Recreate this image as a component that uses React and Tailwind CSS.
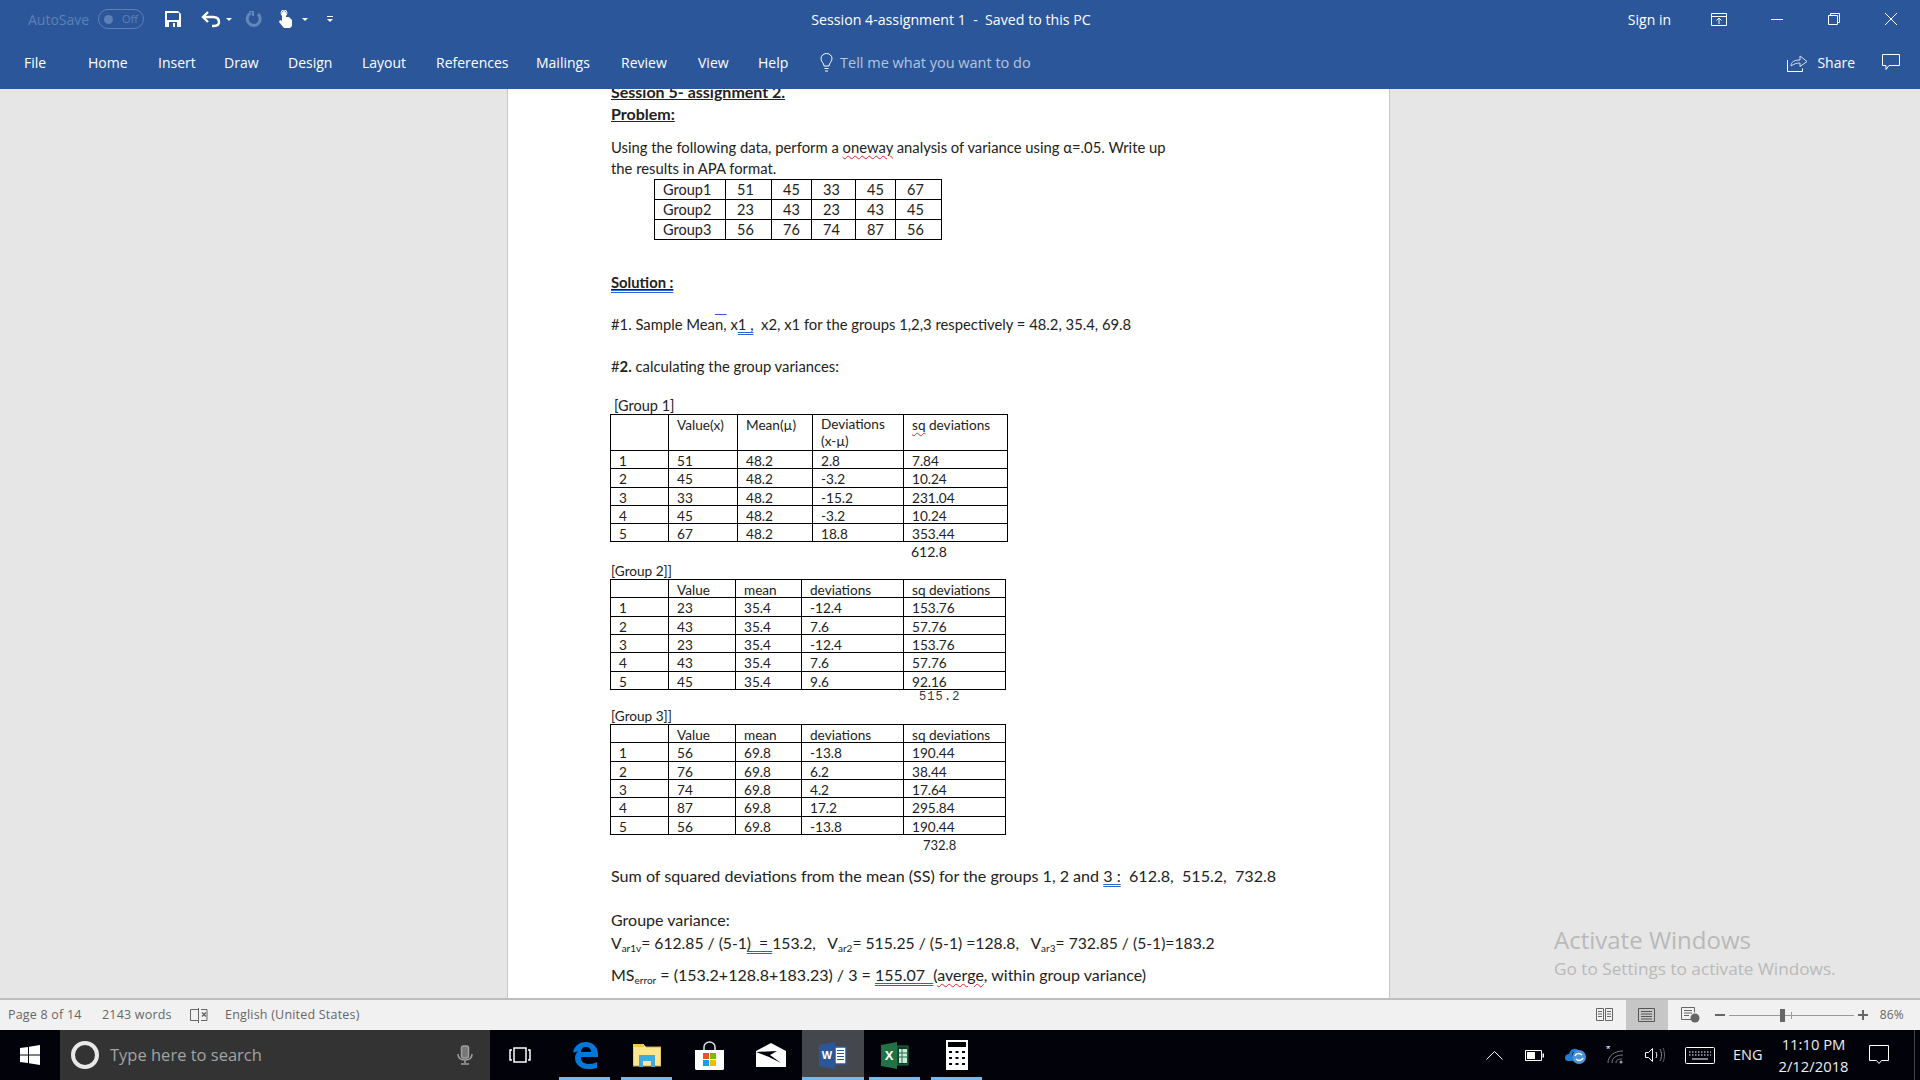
const groupOne = {
	cols: [58, 69, 75, 91, 104],
	heights: [36, 18, 19, 18, 18, 18],
	rows: [
		["", "Value(x)", "Mean(µ)", "Deviations\n(x-µ)", "sq deviations"],
		["1", "51", "48.2", "2.8", "7.84"],
		["2", "45", "48.2", "-3.2", "10.24"],
		["3", "33", "48.2", "-15.2", "231.04"],
		["4", "45", "48.2", "-3.2", "10.24"],
		["5", "67", "48.2", "18.8", "353.44"],
	],
};

const groupTwo = {
	cols: [58, 67, 66, 102, 102],
	heights: [18, 19, 18, 18, 19, 18],
	rows: [
		["", "Value", "mean", "deviations", "sq deviations"],
		["1", "23", "35.4", "-12.4", "153.76"],
		["2", "43", "35.4", "7.6", "57.76"],
		["3", "23", "35.4", "-12.4", "153.76"],
		["4", "43", "35.4", "7.6", "57.76"],
		["5", "45", "35.4", "9.6", "92.16"],
	],
};

const groupThree = {
	cols: [58, 67, 66, 102, 102],
	heights: [18, 19, 18, 18, 19, 18],
	rows: [
		["", "Value", "mean", "deviations", "sq deviations"],
		["1", "56", "69.8", "-13.8", "190.44"],
		["2", "76", "69.8", "6.2", "38.44"],
		["3", "74", "69.8", "4.2", "17.64"],
		["4", "87", "69.8", "17.2", "295.84"],
		["5", "56", "69.8", "-13.8", "190.44"],
	],
};

const smallRows = [
	["Group1", "51", "45", "33", "45", "67"],
	["Group2", "23", "43", "23", "43", "45"],
	["Group3", "56", "76", "74", "87", "56"],
];
const smallCols = [71, 46, 40, 44, 40, 46];

const tabs = [
	["File", "ml-[24px] w-[64px]"],
	["Home", "w-[70px]"],
	["Insert", "w-[66px]"],
	["Draw", "w-[64px]"],
	["Design", "w-[74px]"],
	["Layout", "w-[74px]"],
	["References", "w-[100px]"],
	["Mailings", "w-[85px]"],
	["Review", "w-[77px]"],
	["View", "w-[60px]"],
	["Help", "w-[62px]"],
];

const Wavy = ({ children }) => (
	<span className="underline decoration-wavy decoration-[#d8262c] decoration-1 underline-offset-2">{children}</span>
);

const Blue = ({ children }) => (
	<span className="underline decoration-double decoration-[#2b62d6] decoration-1 underline-offset-2">{children}</span>
);

const DataTable = ({ data }) => (
	<table className="table-fixed border-collapse border border-black -ml-px text-[13.6px] text-[#222]">
		<colgroup>
			{data.cols.map((w, i) => (
				<col key={i} style={{ width: w }} />
			))}
		</colgroup>
		<tbody>
			{data.rows.map((row, r) => (
				<tr key={r} style={{ height: data.heights[r] }}>
					{row.map((cell, c) => (
						<td
							key={c}
							className={`border border-black pl-[8px] pr-0 pb-0 align-top overflow-hidden whitespace-pre-line ${cell.includes("\n") ? "pt-px leading-[17px]" : "pt-[3px] leading-[14px]"}`}
						>
							{cell === "sq deviations" ? (
								<>
									<Wavy>sq</Wavy> deviations
								</>
							) : (
								cell
							)}
						</td>
					))}
				</tr>
			))}
		</tbody>
	</table>
);

const Line = ({ className = "", children }) => (
	<div className={`h-5 leading-5 whitespace-pre text-[#222] ${className}`}>{children}</div>
);

const Sub = ({ children }) => <sub className="text-[10px] leading-none">{children}</sub>;

const TitleBar = () => (
	<div className="h-[38px] flex items-center text-white relative">
		<span className="ml-[28px] w-[70px] text-[14px] text-[#5d80b5]">AutoSave</span>
		<div className="w-[46px] h-[20px] rounded-full border border-[#5d80b5] flex items-center justify-between px-[5px] text-[11px] text-[#5d80b5]">
			<span className="w-[9px] h-[9px] rounded-full bg-[#5d80b5]" />
			Off
		</div>
		<svg className="ml-[21px]" width="16" height="16" viewBox="0 0 16 16">
			<path d="M0 0h13l3 3v13H0z" fill="#fff" />
			<path d="M2 2h12v7H2z" fill="#2b579a" />
			<path d="M4 11h8v5H4z" fill="#2b579a" />
			<path d="M8 12h2v4H8z" fill="#fff" />
		</svg>
		<svg className="ml-[20px]" width="20" height="18" viewBox="0 0 20 18" fill="none" stroke="#fff" strokeWidth="2.4">
			<path d="M7 2 2 7l5 5" />
			<path d="M3 7h9c4 0 6 2 6 5s-2 4-5 4h-2" />
		</svg>
		<span className="ml-[5px] border-x-[3px] border-x-transparent border-t-[3px] border-t-white" />
		<svg className="ml-[13px]" width="17" height="17" viewBox="0 0 17 17" fill="none" stroke="#6486ba" strokeWidth="3">
			<path d="M13 3a6.5 6.5 0 1 1-7-1" />
			<path d="M4 0h4v5" strokeWidth="2" />
		</svg>
		<svg className="ml-[16px]" width="14" height="18" viewBox="0 0 14 18">
			<path d="M4 9V3a2 2 0 0 1 4 0v4h3l3 3v6l-2 2H6L1 12l1-2 2 1z" fill="#fff" />
			<circle cx="6" cy="3" r="3" fill="none" stroke="#fff" />
		</svg>
		<span className="ml-[10px] border-x-[3px] border-x-transparent border-t-[3px] border-t-white" />
		<div className="ml-[19px] flex flex-col items-center gap-[2px]">
			<span className="w-[6px] h-px bg-white" />
			<span className="border-x-[3px] border-x-transparent border-t-[3px] border-t-white" />
		</div>
		<div className="absolute left-0 right-0 top-0 h-[40px] flex items-center justify-center pr-[18px] text-[14.2px] whitespace-pre">
			Session 4-assignment 1  -  Saved to this PC
		</div>
		<span className="ml-auto text-[14px]">Sign in</span>
		<svg className="ml-[40px]" width="16" height="13" viewBox="0 0 16 13" fill="none" stroke="#fff">
			<path d="M.5.5h15v12H.5zM.5 3.500h15M8 11V5M5.500 7.500 8 5l2.500 2.500" />
		</svg>
		<span className="ml-[44px] w-[12px] h-px bg-white" />
		<svg className="ml-[45px]" width="12" height="12" viewBox="0 0 12 12" fill="none" stroke="#fff">
			<path d="M.5 2.500h9v9h-9zM2.500 2.500v-2h9v9h-2" />
		</svg>
		<svg className="ml-[45px] mr-[23px]" width="12" height="12" viewBox="0 0 12 12" stroke="#fff">
			<path d="M0 0l12 12M12 0 0 12" />
		</svg>
	</div>
);

const RibbonTabs = () => (
	<div className="h-[51px] pb-[2px] flex items-center text-white text-[14px]">
		{tabs.map(([label, size]) => (
			<span key={label} className={`shrink-0 ${size}`}>
				{label}
			</span>
		))}
		<svg width="13" height="19" viewBox="0 0 13 19" fill="none" stroke="#fff">
			<path d="M4 13c0-3-3-4-3-7.500a5.500 5 0 0 1 11 0C12 9 9 10 9 13zM4.500 15.500h4M5 18h3" />
		</svg>
		<span className="ml-[7px] text-[14.5px] text-[#b4c5de]">Tell me what you want to do</span>
		<svg className="ml-auto" width="21" height="18" viewBox="0 0 21 18" fill="none" stroke="#fff">
			<path d="M.5 6v11.500h15v-3" />
			<path d="M4 12c0-4 3-6 9-6V2l7 5.500-7 5V9c-4 0-6 1-9 3z" stroke="#d5deec" />
		</svg>
		<span className="ml-[9px] text-[14px]">Share</span>
		<svg className="ml-[27px] mr-[20px]" width="18" height="17" viewBox="0 0 18 17" fill="none" stroke="#fff">
			<path d="M.5.500h17v11H7l-3 4v-4H.5z" />
		</svg>
	</div>
);

const Document = () => (
	<div className="w-[883px] h-full bg-white border-x border-[#c8c8c8] pl-[103px] overflow-hidden text-[14.8px] font-['Lato',sans-serif]">
		<Line className="-mt-[7px] text-[16px] font-bold underline">Session 5- assignment 2.</Line>
		<Line className="mt-[2px] text-[16px] font-bold underline">Problem:</Line>
		<Line className="mt-[13px]">
			Using the following data, perform a <Wavy>oneway</Wavy> analysis of variance using α=.05. Write up
		</Line>
		<Line className="mt-px">the results in APA format.</Line>
		<table className="mt-px ml-[43px] table-fixed border-collapse border border-black text-[14.5px] leading-[19px] text-[#222]">
			<colgroup>
				{smallCols.map((w, i) => (
					<col key={i} style={{ width: w }} />
				))}
			</colgroup>
			<tbody>
				{smallRows.map((row) => (
					<tr key={row[0]} className="h-5">
						{row.map((cell, c) => (
							<td key={c} className={`border border-black py-0 ${c === 0 ? "pl-[8px]" : "pl-[11px]"}`}>
								{cell}
							</td>
						))}
					</tr>
				))}
			</tbody>
		</table>
		<Line className="mt-[32px] font-bold underline">
			<Blue>Solution :</Blue>
		</Line>
		<Line className="mt-[22px]">
			#1. Sample Mea<span className="overline decoration-[#2b62d6]">n,</span> x<Blue>1 ,</Blue>  x2, x1 for the groups 1,2,3 respectively = 48.2, 35.4, 69.8
		</Line>
		<Line className="mt-[22px]">
			#<b>2.</b> calculating the group variances:
		</Line>
		<div className="mt-[22px] h-4 pl-[3px] text-[14.5px] leading-4 text-[#222]">[Group 1]</div>
		<DataTable data={groupOne} />
		<div className="mt-[2px] h-4 pl-[300px] text-[14px] leading-4 text-[#222]">612.8</div>
		<div className="mt-[3px] h-4 text-[13.6px] leading-4 text-[#222]">[Group 2]]</div>
		<DataTable data={groupTwo} />
		<div className="h-[14px] pl-[308px] font-['Liberation_Mono',monospace] text-[12px] tracking-[1.1px] leading-[14px] text-[#333]">515.2</div>
		<div className="mt-1 h-4 text-[13.6px] leading-4 text-[#222]">[Group 3]]</div>
		<DataTable data={groupThree} />
		<div className="mt-[2px] h-4 pl-[312px] text-[13px] leading-4 text-[#222]">732.8</div>
		<Line className="mt-[13px] text-[16.1px]">
			Sum of squared deviations from the mean (SS) for the groups 1, 2 and <Blue>3 :</Blue>  612.8,  515.2,  732.8
		</Line>
		<Line className="mt-[24px] text-[16px]">Groupe variance:</Line>
		<Line className="mt-[3px] text-[15.7px]">
			V<Sub>ar1v</Sub>= 612.85 / (5-1<Blue>)  = </Blue>153.2,   V<Sub>ar2</Sub>= 515.25 / (5-1) =128.8,   V<Sub>ar3</Sub>= 732.85 / (5-1)=183.2
		</Line>
		<Line className="mt-[12px] text-[16px]">
			MS<Sub>error</Sub> = (153.2+128.8+183.23) / 3 = <Blue>155.07  </Blue>(<Wavy>averge</Wavy>, within group variance)
		</Line>
	</div>
);

const StatusBar = () => (
	<div className="h-[30px] bg-[#f1f1f1] flex items-center text-[12.5px] tracking-[0.2px] text-[#666]">
		<span className="ml-[8px] w-[94px]">Page 8 of 14</span>
		<span className="w-[88px]">2143 words</span>
		<svg width="18" height="15" viewBox="0 0 18 15" fill="none" stroke="#666">
			<path d="M8.500 1.500H.5v11h8zM8.500 0v15M11 1.500h6v11h-6" />
			<path d="M12 4.500l4 4M16 4.500l-4 4" strokeWidth="1.500" />
		</svg>
		<span className="ml-[17px]">English (United States)</span>
		<svg className="ml-auto" width="17" height="14" viewBox="0 0 17 14" fill="none" stroke="#666">
			<path d="M.5.500h7v12h-7zM9.500.500h7v12h-7zM2 3.500h4M2 6h4M2 8.500h4M11 3.500h4M11 6h4M11 8.500h4" />
		</svg>
		<div className="ml-[13px] w-[42px] h-[30px] bg-[#c6c6c6] flex items-center justify-center">
			<svg width="17" height="14" viewBox="0 0 17 14" fill="none" stroke="#555">
				<path d="M.5.500h16v13H.5zM3 3.500h11M3 6h11M3 8.500h11M3 11h11" />
			</svg>
		</div>
		<svg className="ml-[13px]" width="19" height="16" viewBox="0 0 19 16" fill="none" stroke="#666">
			<path d="M10 12.500H.5v-12h13v5M3 3.500h8M3 6h8M3 8.500h5" />
			<circle cx="14" cy="11" r="4.500" fill="#666" stroke="none" />
		</svg>
		<span className="ml-[15px] w-[10px] h-[2px] bg-[#666]" />
		<div className="ml-[4px] w-[125px] h-px bg-[#999] relative">
			<span className="absolute left-[51px] -top-[6px] w-[5px] h-[13px] bg-[#666]" />
			<span className="absolute left-[62px] -top-[3px] w-px h-[7px] bg-[#999]" />
		</div>
		<span className="ml-[4px] w-[10px] h-[10px] relative">
			<span className="absolute left-0 top-[4px] w-[10px] h-[2px] bg-[#666]" />
			<span className="absolute left-[4px] top-0 w-[2px] h-[10px] bg-[#666]" />
		</span>
		<span className="ml-[12px] mr-[16px] text-[12px] text-[#666]">86%</span>
	</div>
);

const TaskSlot = ({ active, running, children }) => (
	<div className={`w-[62px] h-[50px] flex items-center justify-center relative ${active ? "bg-[#44484c]" : ""}`}>
		{children}
		{(running || active) && (
			<span className={`absolute bottom-0 h-[3px] bg-[#76b9ed] ${active ? "left-0 right-0" : "left-[5px] right-[6px]"}`} />
		)}
	</div>
);

const Taskbar = () => (
	<div className="h-[50px] bg-[#01020a] flex items-center text-white">
		<div className="w-[60px] flex justify-center">
			<svg width="20" height="20" viewBox="0 0 20 20" fill="#fff">
				<path d="M0 3l8-1v7.500H0zM9 1.800 20 0v9.500H9zM0 10.500h8V18l-8-1zM9 10.500h11V20L9 18.200z" />
			</svg>
		</div>
		<div className="w-[430px] h-[50px] bg-[#333] flex items-center pl-[11px] pr-[17px]">
			<span className="w-[28px] h-[28px] rounded-full border-[4px] border-[#e8e8e8]" />
			<span className="ml-[11px] text-[16.5px] text-[#a3a3a3]">Type here to search</span>
			<svg className="ml-auto" width="16" height="20" viewBox="0 0 16 20" fill="none" stroke="#a0a0a0" strokeWidth="1.500">
				<rect x="4.500" y="1" width="7" height="12" rx="2" fill="#777" />
				<path d="M1 9c0 4 3 6 7 6s7-2 7-6M8 15v3M4 19h8" />
			</svg>
		</div>
		<svg className="ml-[19px]" width="22" height="16" viewBox="0 0 22 16" fill="none" stroke="#fff" strokeWidth="1.500">
			<path d="M5 1h12v14H5zM3 3H1v10h2M19 3h2v10h-2" />
		</svg>
		<div className="ml-[23px] flex">
			<TaskSlot running>
				<svg width="26" height="27" viewBox="0 0 26 27" fill="#0078d7">
					<path d="M1 10C3 3 8 0 14 0c7 0 12 5 12 12v3H9c0 5 3 7 8 7 3 0 6-1 8-2v6c-3 1-6 1-9 1-8 0-13-5-13-11 0-3 1-5 3-7-2 1-4 2-5 1zm8 0h10c0-3-2-5-5-5s-5 2-5 5z" />
				</svg>
			</TaskSlot>
			<TaskSlot running>
				<svg width="28" height="24" viewBox="0 0 28 24">
					<path d="M0 2h11l2 2h15v19H0z" fill="#ffe58f" stroke="#c9a94f" />
					<path d="M0 1h11v3H0z" fill="#f2c84b" />
					<path d="M6 12h16v12h-4v-6h-8v6H6z" fill="#3fa9e0" />
					<path d="M10 18h8v4h-8z" fill="#ffe58f" />
				</svg>
			</TaskSlot>
			<TaskSlot>
				<svg width="29" height="29" viewBox="0 0 29 29">
					<path d="M9 9V6a5.500 5 0 0 1 11 0v3" fill="none" stroke="#e5e5e5" strokeWidth="1.500" />
					<path d="M0 9h29v19l-1 1H1l-1-1z" fill="#fff" />
					<path d="M8 12h6v6H8z" fill="#f25022" />
					<path d="M15 12h6v6h-6z" fill="#7fba00" />
					<path d="M8 19h6v6H8z" fill="#00a4ef" />
					<path d="M15 19h6v6h-6z" fill="#ffb900" />
				</svg>
			</TaskSlot>
			<TaskSlot>
				<svg width="30" height="24" viewBox="0 0 30 24">
					<path d="M15 0l15 8v16H0V8z" fill="#fff" />
					<path d="M0 9 21 8 14 12 25 20 13 14z" fill="#01020a" />
				</svg>
			</TaskSlot>
			<TaskSlot active>
				<svg width="28" height="27" viewBox="0 0 28 27">
					<path d="M16 5h11v17H16z" fill="#fff" stroke="#2b579a" strokeWidth="1.500" />
					<path d="M18 8h7v1h-7zM18 11h7v1h-7zM18 14h7v1h-7zM18 17h7v1h-7z" fill="#2b579a" />
					<path d="M0 3l16-3v27L0 24z" fill="#2b579a" />
					<text x="8" y="17" textAnchor="middle" fill="#fff" fontSize="11" fontWeight="700" fontFamily="Liberation Sans">W</text>
				</svg>
			</TaskSlot>
			<TaskSlot running>
				<svg width="28" height="27" viewBox="0 0 28 27">
					<path d="M16 4h11v19H16z" fill="#0d3c28" stroke="#217346" />
					<path d="M18 7h8v14h-8z" fill="#cfe8d8" />
					<path d="M21 7v14M18 11h8M18 15h8" stroke="#217346" />
					<path d="M0 3l16-3v27L0 24z" fill="#217346" />
					<text x="8" y="18" textAnchor="middle" fill="#fff" fontSize="13" fontWeight="700" fontFamily="Liberation Sans">X</text>
				</svg>
			</TaskSlot>
			<TaskSlot running>
				<svg width="22" height="30" viewBox="0 0 22 30">
					<path d="M0 0h22v30H0z" fill="#fff" />
					<path d="M2 2h18v5H2z" fill="#01020a" />
					<path d="M3 11h3v2H3zM9.500 11h3v2h-3zM16 11h3v2h-3zM3 17h3v2H3zM9.500 17h3v2h-3zM16 17h3v2h-3zM3 23h3v2H3zM9.500 23h3v2h-3zM16 23h3v2h-3z" fill="#01020a" />
				</svg>
			</TaskSlot>
		</div>
		<svg className="ml-[498px]" width="17" height="9" viewBox="0 0 17 9" fill="none" stroke="#fff">
			<path d="M.5 8.500l8-8 8 8" />
		</svg>
		<svg className="ml-[22px]" width="19" height="11" viewBox="0 0 19 11">
			<path d="M.5.500h16v10H.5z" fill="none" stroke="#fff" />
			<path d="M2 2h8v7H2zM17.500 3.500H19v4h-1.500z" fill="#fff" />
		</svg>
		<svg className="ml-[21px]" width="21" height="17" viewBox="0 0 21 17">
			<path d="M0 11c0-3 2-4 4-4 1-4 4-6 7-5 2 0 3 2 3 3H8c-2 3-1 6 0 9H3c-2 0-3-1-3-3z" fill="#1f7fd6" />
			<circle cx="14" cy="10" r="7" fill="#4a93d8" />
			<path d="M10 9c1-3 5-3 7-1M18 11c-1 3-5 3-7 1" fill="none" stroke="#fff" strokeWidth="1.500" />
		</svg>
		<svg className="ml-[20px]" width="19" height="18" viewBox="0 0 19 18" fill="none" stroke="#7f7f7f">
			<path d="M2 17c0-7 6-12 15-12M6 17c0-5 4-8 11-8M10 17c0-3 2-4 6-4" />
			<circle cx="15" cy="16" r="1.500" fill="#9a9a9a" stroke="none" />
			<text x="0" y="7" fill="#fff" stroke="none" fontSize="11" fontFamily="Liberation Sans">*</text>
		</svg>
		<svg className="ml-[20px]" width="20" height="16" viewBox="0 0 20 16" fill="none" stroke="#fff">
			<path d="M.5 5.500h3l4-4v13l-4-4h-3z" />
			<path d="M11 5c1 2 1 4 0 6" />
			<path d="M15 2c2 4 2 8 0 12" stroke="#8a8a8a" />
			<path d="M18 1c2 4 2 10 0 14" stroke="#666" />
		</svg>
		<svg className="ml-[20px]" width="30" height="17" viewBox="0 0 30 17" fill="none" stroke="#fff">
			<rect x=".5" y=".5" width="29" height="16" rx="1" />
			<path d="M4 5h22M4 8h22" strokeDasharray="1.500 1.500" />
			<path d="M7 12h16" />
		</svg>
		<span className="ml-[18px] text-[14.5px] text-[#eee]">ENG</span>
		<div className="ml-[14px] w-[74px] flex flex-col items-center text-[14.8px] leading-[22px] text-[#eee] whitespace-nowrap">
			<span>11:10 PM</span>
			<span>2/12/2018</span>
		</div>
		<svg className="ml-[18px]" width="20" height="20" viewBox="0 0 20 20" fill="none" stroke="#fff">
			<path d="M.5.500h19v15h-7l-2.500 3-2.500-3h-7z" />
		</svg>
		<span className="ml-auto mr-[5px] w-px h-[50px] bg-[#444]" />
	</div>
);

export default function App() {
	return (
		<div className="w-[1920px] h-[1080px] flex flex-col overflow-hidden bg-[#e6e6e6] font-['Open_Sans',sans-serif]">
			<div className="h-[89px] shrink-0 bg-[#2b579a]">
				<TitleBar />
				<RibbonTabs />
			</div>
			<div className="h-[911px] shrink-0 pl-[507px] border-b-2 border-[#bdbdbd] relative">
				<Document />
				<div className="absolute left-[1554px] top-[835px] text-[#b9b9b9]">
					<div className="text-[24px] leading-[32px]">Activate Windows</div>
					<div className="text-[17.2px] leading-[26px]">Go to Settings to activate Windows.</div>
				</div>
			</div>
			<StatusBar />
			<Taskbar />
		</div>
	);
}
